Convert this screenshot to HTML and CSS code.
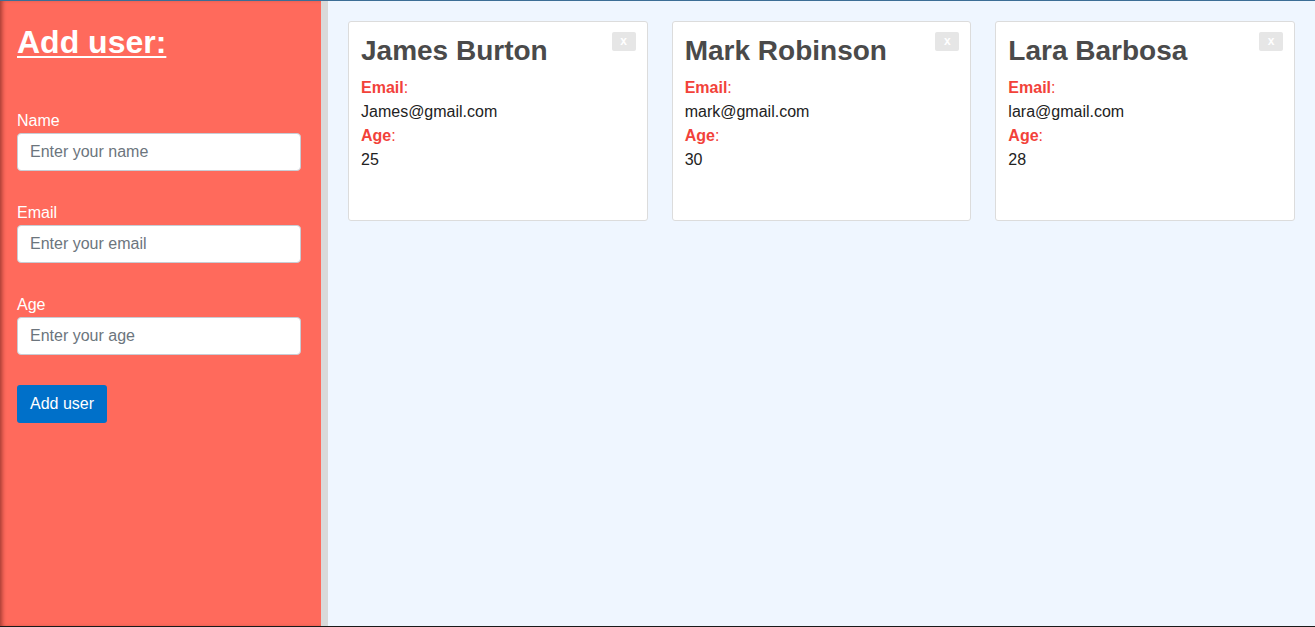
FILE: index.html
```html
<!DOCTYPE html>
<html>
<head>
<meta charset="utf-8">
<link rel="stylesheet" href="styles.css">
</head>
<body>
<div class="app">
  <aside class="sidebar">
    <h1 class="title">Add user:</h1>
    <form class="form">
      <label class="field">
        <span class="label">Name</span>
        <input class="input" type="text" placeholder="Enter your name">
      </label>
      <label class="field">
        <span class="label">Email</span>
        <input class="input" type="text" placeholder="Enter your email">
      </label>
      <label class="field">
        <span class="label">Age</span>
        <input class="input" type="text" placeholder="Enter your age">
      </label>
      <button type="button" class="btn">Add user</button>
    </form>
  </aside>
  <main class="main">
    <div class="card">
      <button type="button" class="close">x</button>
      <h2 class="name">James Burton</h2>
      <div class="line"><b class="key">Email</b><span class="colon">:</span></div>
      <div class="line">James@gmail.com</div>
      <div class="line"><b class="key">Age</b><span class="colon">:</span></div>
      <div class="line">25</div>
    </div>
    <div class="card">
      <button type="button" class="close">x</button>
      <h2 class="name">Mark Robinson</h2>
      <div class="line"><b class="key">Email</b><span class="colon">:</span></div>
      <div class="line">mark@gmail.com</div>
      <div class="line"><b class="key">Age</b><span class="colon">:</span></div>
      <div class="line">30</div>
    </div>
    <div class="card">
      <button type="button" class="close">x</button>
      <h2 class="name">Lara Barbosa</h2>
      <div class="line"><b class="key">Email</b><span class="colon">:</span></div>
      <div class="line">lara@gmail.com</div>
      <div class="line"><b class="key">Age</b><span class="colon">:</span></div>
      <div class="line">28</div>
    </div>
  </main>
</div>
</body>
</html>
```
FILE: styles.css
```css
* { box-sizing: border-box; }
html, body { margin: 0; padding: 0; height: 100%; }
body {
  font-family: "Liberation Sans", Arial, sans-serif;
  font-size: 16px;
  color: #222;
  border-top: 1px solid #3c6e96;
  border-bottom: 1px solid #1a1a1a;
}
.app {
  display: flex;
  height: 625px;
}
.sidebar {
  width: 321px;
  flex: none;
  background: #ff6a5c;
  padding: 0 20px 0 17px;
  box-shadow: inset 4px 0 4px -2px rgba(90, 20, 15, 0.55);
  color: #fff;
}
.title {
  margin: 0;
  padding-top: 23px;
  font-size: 32px;
  line-height: 37px;
  font-weight: bold;
  text-decoration: underline;
  text-decoration-thickness: 2px;
  text-underline-offset: 3px;
}
.form {
  display: flex;
  flex-direction: column;
  margin-top: 48px;
}
.field {
  display: flex;
  flex-direction: column;
  margin-bottom: 30px;
}
.label {
  padding-top: 2px;
  margin-bottom: 3px;
  font-size: 16px;
  line-height: 19px;
  color: #fff;
}
.input {
  width: 284px;
  height: 38px;
  border: 1px solid #c8ccd4;
  border-radius: 4px;
  padding: 0 12px;
  font-family: "Liberation Sans", Arial, sans-serif;
  font-size: 16px;
  color: #333;
  background: #fff;
}
.input::placeholder { color: #6c757d; }
.btn {
  align-self: flex-start;
  width: 90px;
  height: 38px;
  border: none;
  border-radius: 3px;
  background: #0070c9;
  color: #fff;
  font-family: "Liberation Sans", Arial, sans-serif;
  font-size: 16px;
  padding: 0;
}
.main {
  flex: 1;
  background: #eff6ff;
  border-left: 7px solid #d9d9d9;
  padding: 20px 20px 0 20px;
  display: flex;
  align-items: flex-start;
  gap: 24px;
}
.card {
  position: relative;
  flex: 1;
  height: 200px;
  background: #fff;
  border: 1px solid #dcdcdc;
  border-radius: 3px;
  padding: 13px 12px;
}
.close {
  position: absolute;
  top: 10px;
  right: 11px;
  width: 24px;
  height: 19px;
  border: none;
  border-radius: 2px;
  background: #e6e6e6;
  color: #fff;
  font-family: "Liberation Sans", Arial, sans-serif;
  font-size: 12px;
  font-weight: bold;
  padding: 0;
  line-height: 19px;
}
.name {
  margin: 0 0 9px;
  font-size: 28px;
  line-height: 32px;
  font-weight: bold;
  color: #4a4a4a;
}
.line {
  font-size: 16px;
  line-height: 24px;
  color: #222;
}
.key { color: #f2423a; font-weight: bold; }
.colon { color: #f2423a; }
```
